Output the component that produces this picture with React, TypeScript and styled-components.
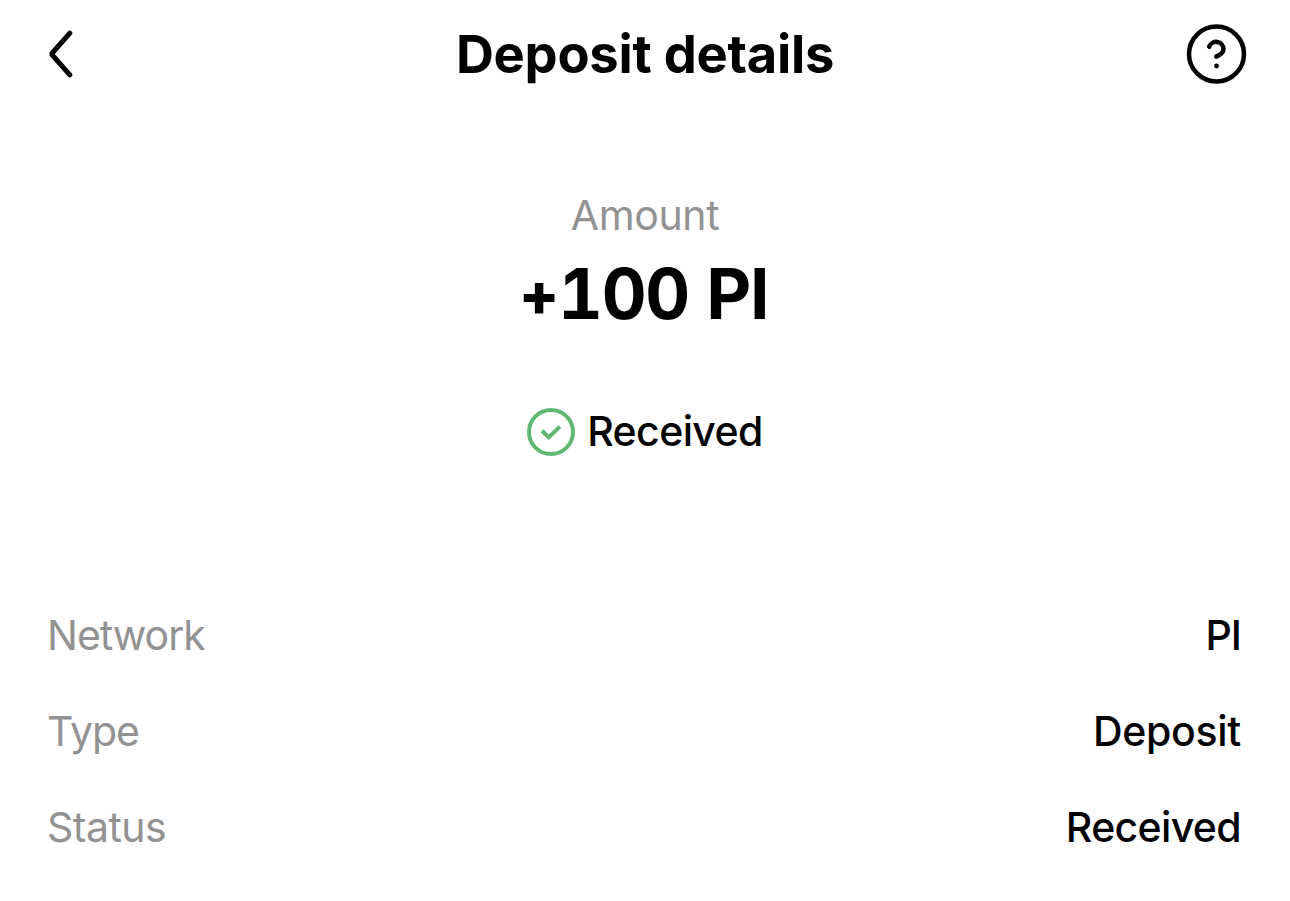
import styled, { createGlobalStyle } from "styled-components";

const GlobalStyle = createGlobalStyle`
  body {
    margin: 0;
    background: #fff;
    color: #000;
    font-family: Inter, sans-serif;
  }
`

const Page = styled.div`
  height: 901px;
  box-sizing: border-box;
  overflow: hidden;
`

const Header = styled.header`
  height: 108px;
  padding: 0 43px 0 48px;
  display: flex;
  align-items: center;
  justify-content: space-between;
`

const IconButton = styled.button<{ $width: number }>`
  display: flex;
  width: ${(props) => props.$width}px;
  padding: 0;
  border: none;
  background: none;
  color: inherit;
`

const Title = styled.h1`
  margin: 0;
  text-align: center;
  font-size: 52.5px;
  font-weight: 700;
  line-height: 64px;
  letter-spacing: -0.25px;
`

const Summary = styled.section`
  padding-top: 84px;
  display: flex;
  flex-direction: column;
  align-items: center;
`

const Label = styled.span<{ $spacing: number }>`
  padding-bottom: 2px;
  font-size: 41px;
  line-height: 46px;
  color: #929292;
  letter-spacing: ${(props) => props.$spacing}px;
`

const Amount = styled.strong`
  height: 88px;
  margin-top: 10px;
  padding-right: 2px;
  font-size: 69.5px;
  font-weight: 700;
  line-height: 88px;
  letter-spacing: -1.3px;
  font-variant-numeric: tabular-nums;
`

const Sign = styled.span`
  font-size: 60px;
  font-weight: 800;
  line-height: 1;
  letter-spacing: -0.5px;
  vertical-align: 3px;
`

const Value = styled.span<{ $spacing?: number }>`
  padding-bottom: 2px;
  font-size: 41px;
  font-weight: 500;
  line-height: 46px;
  letter-spacing: ${(props) => props.$spacing ?? -0.6}px;
`

const State = styled.div`
  margin-top: 70px;
  display: flex;
  align-items: center;
  gap: 12px;
`

const DetailList = styled.section`
  padding: 156px 49px 0 47px;
  display: flex;
  flex-direction: column;
  gap: 48px;
`

const DetailRow = styled.div`
  display: flex;
  justify-content: space-between;
`

const details = [
  { label: 'Network', labelSpacing: -1, value: 'PI', valueSpacing: -1 },
  { label: 'Type', labelSpacing: -1, value: 'Deposit', valueSpacing: -0.3 },
  { label: 'Status', labelSpacing: -0.5, value: 'Received', valueSpacing: -0.65 },
]

const App: React.FC = () => {
  return (
    <Page>
      <GlobalStyle />
      <Header>
        <IconButton $width={56} aria-label="Back">
          <svg width="26" height="48" viewBox="0 0 26 48" fill="none" stroke="currentColor" strokeWidth="5" strokeLinecap="round">
            <path d="M21.8 3.2 3.4 24 21.8 44.8" strokeLinejoin="bevel" />
          </svg>
        </IconButton>
        <Title>Deposit details</Title>
        <IconButton $width={61} aria-label="Help">
          <svg width="61" height="60" viewBox="0 0 61 60" fill="none" stroke="currentColor" strokeWidth="4.5" strokeLinecap="round">
            <circle cx="30.5" cy="30" r="27.5" />
            <path d="M23.2 22.6a7.4 7.4 0 0 1 14.3 2.4c0 5-7.2 7.5-7.2 7.5" />
            <circle cx="30.5" cy="42" r="2.4" fill="currentColor" stroke="none" />
          </svg>
        </IconButton>
      </Header>
      <Summary>
        <Label $spacing={-0.35}>Amount</Label>
        <Amount><Sign>+</Sign>100 PI</Amount>
        <State>
          <svg width="48" height="48" viewBox="0 0 48 48" fill="none" stroke="#62b775" strokeWidth="4">
            <circle cx="24" cy="24" r="22" />
            <path d="m15 22.8 6.7 6.4L33 18.6" />
          </svg>
          <Value>Received</Value>
        </State>
      </Summary>
      <DetailList>
        {details.map(({ label, labelSpacing, value, valueSpacing }) => (
          <DetailRow key={label}>
            <Label $spacing={labelSpacing}>{label}</Label>
            <Value $spacing={valueSpacing}>{value}</Value>
          </DetailRow>
        ))}
      </DetailList>
    </Page>
  )
}

export default App
